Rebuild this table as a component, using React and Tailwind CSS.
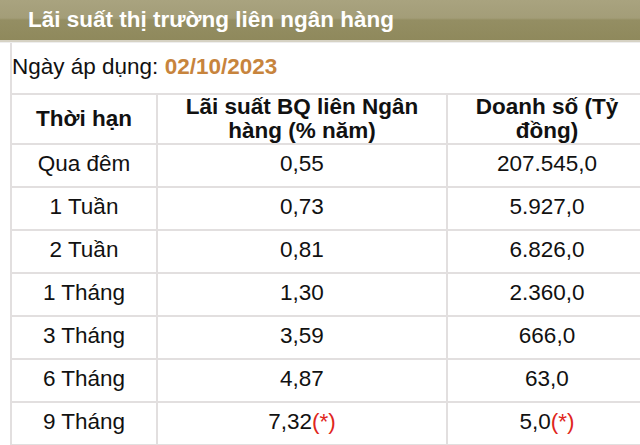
import React from "react";

const rows = [
  ["Qua đêm", "0,55", "207.545,0"],
  ["1 Tuần", "0,73", "5.927,0"],
  ["2 Tuần", "0,81", "6.826,0"],
  ["1 Tháng", "1,30", "2.360,0"],
  ["3 Tháng", "3,59", "666,0"],
  ["6 Tháng", "4,87", "63,0"],
  ["9 Tháng", "7,32", "5,0", true],
];

export default function App() {
  return (
    <div
      className="w-[640px] h-[445px] overflow-hidden bg-white text-[#111]"
      style={{ fontFamily: '"Liberation Sans", Arial, sans-serif' }}
    >
      <div className="h-[40px] bg-[linear-gradient(to_bottom,#a9a37f_0%,#a39d78_45%,#948e63_50%,#8f895c_100%)] pl-[28px] flex items-center">
        <span className="text-white font-bold text-[22.5px] leading-none">
          Lãi suất thị trường liên ngân hàng
        </span>
      </div>
      <div className="h-[2px] bg-[#d6d2c4]" />
      <div className="h-[1px] bg-[#eeeeee]" />
      <div className="ml-[10px] w-[640px] border-l-2 border-[#e2dfdf]">
        <div className="h-[50px] pb-[2px] flex items-center text-[22.5px] leading-none">
          <span>Ngày áp dụng:&nbsp;</span>
          <span className="font-bold text-[#c7843d]">02/10/2023</span>
        </div>
        <div className="border-t-2 border-[#e2dfdf]">
          <div className="grid grid-cols-[146px_290px_200px] h-[50px] border-b-2 border-[#e2dfdf] font-bold text-[22.5px] leading-[24px] text-center">
            <div className="border-r-2 border-[#e2dfdf] flex items-center justify-center">Thời hạn</div>
            <div className="border-r-2 border-[#e2dfdf] flex items-center justify-center">
              Lãi suất BQ liên Ngân
              <br />
              hàng (% năm)
            </div>
            <div className="border-r-2 border-[#e2dfdf] flex items-center justify-center">
              Doanh số (Tỷ
              <br />
              đồng)
            </div>
          </div>
          {rows.map(([a, b, c, star]) => (
            <div
              key={a}
              className="grid grid-cols-[146px_290px_200px] h-[43px] border-b-2 border-[#e2dfdf] text-[22.5px] leading-none text-center"
            >
              <div className="border-r-2 border-[#e2dfdf] flex items-center justify-center pb-[2px]">{a}</div>
              <div className="border-r-2 border-[#e2dfdf] flex items-center justify-center pb-[2px]">
                {b}
                {star && <span className="text-[#e0261c]">(*)</span>}
              </div>
              <div className="border-r-2 border-[#e2dfdf] flex items-center justify-center pb-[2px]">
                {c}
                {star && <span className="text-[#e0261c]">(*)</span>}
              </div>
            </div>
          ))}
        </div>
      </div>
    </div>
  );
}
